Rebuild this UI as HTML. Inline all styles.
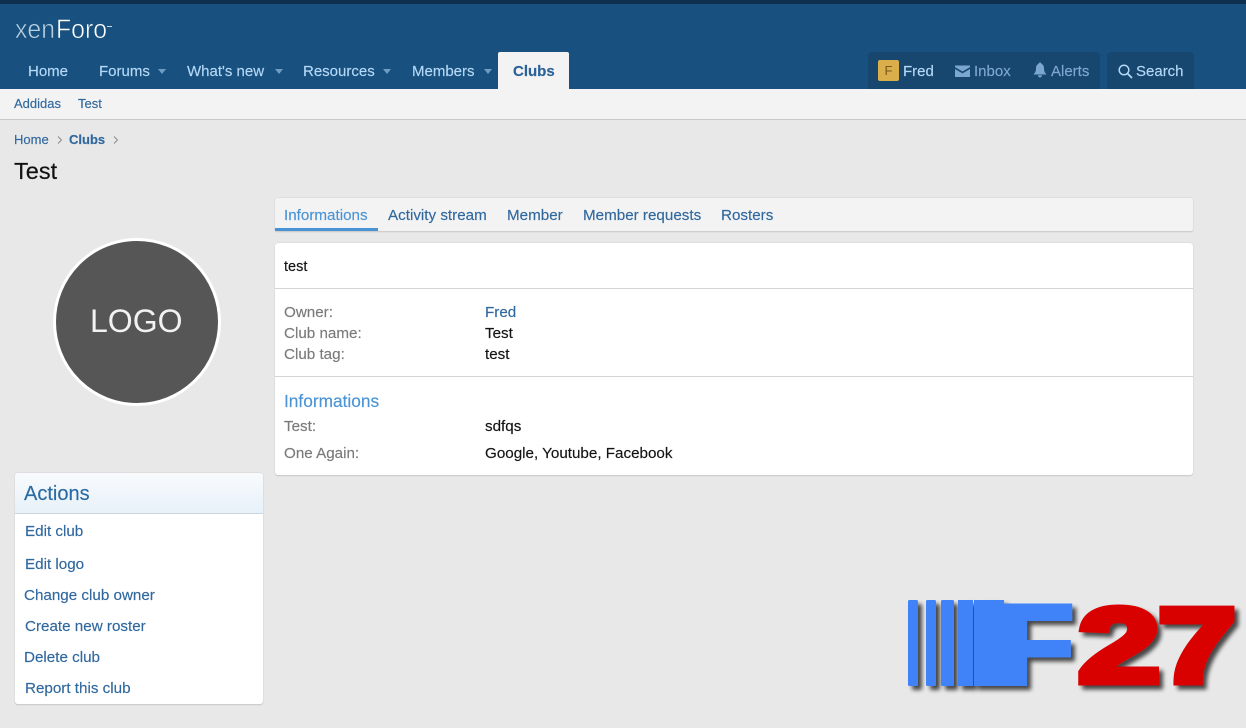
<!DOCTYPE html>
<html><head><meta charset="utf-8"><title>Test</title>
<style>
html,body{margin:0;padding:0}
body{width:1246px;height:728px;position:relative;overflow:hidden;background:#e8e8e8;font-family:"Liberation Sans",sans-serif;color:#141414}
.b{position:absolute}
.t{position:absolute;white-space:nowrap;line-height:20px;font-size:15.2px;margin-top:1px;-webkit-text-stroke:.15px currentColor}
.n{color:#b5d8f6;font-size:15px;top:61px}
.g{color:#7a7a7a}
.s{font-size:13px;color:#30689e}
.a{color:#30689e}
.c{position:absolute;top:69px;width:0;height:0;border-left:4.5px solid transparent;border-right:4.5px solid transparent;border-top:5px solid #6f9cc5}
</style></head><body>
<div class="b" style="left:0;top:0;width:1246px;height:4px;background:#0e2f4e"></div>
<div class="b" style="left:0;top:4px;width:1246px;height:85px;background:#18517f"></div>
<svg class="b" style="left:0;top:0" width="130" height="50">
<text x="15" y="38" font-family="Liberation Sans" font-size="27" fill="#b9d0e2" stroke="#18517f" stroke-width=".6" textLength="40" lengthAdjust="spacingAndGlyphs">xen</text>
<text x="56" y="38" font-family="Liberation Sans" font-size="27" fill="#fff" stroke="#18517f" stroke-width=".6" textLength="51" lengthAdjust="spacingAndGlyphs">Foro</text>
<rect x="107" y="26" width="5" height="1" fill="#c8d8e6"/>
</svg>
<div class="t n" style="left:28px">Home</div>
<div class="t n" style="left:99px">Forums</div><div class="c" style="left:158px"></div>
<div class="t n" style="left:187px">What's new</div><div class="c" style="left:275px"></div>
<div class="t n" style="left:303px">Resources</div><div class="c" style="left:383px"></div>
<div class="t n" style="left:412px">Members</div><div class="c" style="left:484px"></div>
<div class="b" style="left:498px;top:52px;width:71px;height:37px;background:#f3f3f3;border-radius:2px 2px 0 0"></div>
<div class="t" style="left:513px;top:61px;font-size:15px;font-weight:bold;color:#2b6299">Clubs</div>

<div class="b" style="left:868px;top:52px;width:232px;height:37px;background:#17476f;border-radius:4px 4px 0 0"></div>
<div class="b" style="left:1107px;top:52px;width:87px;height:37px;background:#17476f;border-radius:4px 4px 0 0"></div>
<div class="b" style="left:878px;top:60px;width:21px;height:21px;background:#d9ae4b;border-radius:2px;color:#77591c;font-size:13px;line-height:21px;text-align:center">F</div>
<div class="t n" style="left:903px">Fred</div>
<svg class="b" style="left:954px;top:64px" width="17" height="14"><path d="M1 1.500h15v1.600L8.500 7.500 1 3.100zM1 5l7.500 4.400L16 5v8H1z" fill="#7ba7cf"/></svg>
<div class="t n" style="left:974px;color:#7ea8cf">Inbox</div>
<svg class="b" style="left:1032px;top:62px" width="16" height="16"><path d="M8 .5c1 0 1.400.7 1.400 1.400C11.300 2.600 12 4.300 12 6.500c0 3 1 4.300 2.500 6H1.500C3 10.800 4 9.500 4 6.500c0-2.200.7-3.900 2.600-4.600C6.600 1.200 7 .5 8 .5zM6 13.300h4c0 1.300-1 2.200-2 2.200s-2-.9-2-2.200z" fill="#7ba7cf"/></svg>
<div class="t n" style="left:1051px;color:#7ea8cf">Alerts</div>
<svg class="b" style="left:1117px;top:63px" width="16" height="16"><circle cx="7" cy="7" r="4.800" fill="none" stroke="#b5d8f6" stroke-width="1.500"/><path d="M10.500 10.500L14.500 14.500" stroke="#b5d8f6" stroke-width="1.800" stroke-linecap="round"/></svg>
<div class="t n" style="left:1136px">Search</div>

<div class="b" style="left:0;top:89px;width:1246px;height:30px;background:#f3f3f3;border-bottom:1px solid #c9c9c9"></div>
<div class="t s" style="left:14px;top:93px">Addidas</div>
<div class="t s" style="left:78px;top:93px">Test</div>

<div class="t s" style="left:14px;top:129px">Home</div>
<svg class="b" style="left:56px;top:135px" width="8" height="10"><path d="M2 1.500L5.500 5 2 8.500" fill="none" stroke="#8a8a8a"/></svg>
<div class="t s" style="left:69px;top:129px;font-weight:bold">Clubs</div>
<svg class="b" style="left:112px;top:135px" width="8" height="10"><path d="M2 1.500L5.500 5 2 8.500" fill="none" stroke="#8a8a8a"/></svg>
<div class="t" style="left:14px;top:161px;font-size:23.500px;color:#111;margin-top:0">Test</div>

<div class="b" style="left:53px;top:238px;width:162px;height:162px;border:3px solid #fff;border-radius:50%;background:#565656"></div>
<div class="t" style="left:90px;top:311px;font-size:32px;color:#f2f2f2;margin-top:0;-webkit-text-stroke:0">LOGO</div>

<div class="b" style="left:275px;top:198px;width:918px;height:33px;background:#f3f3f3;border-radius:2px;box-shadow:0 0 0 .5px #d5d5d5,0 1px 1px #bbb"></div>
<div class="b" style="left:275px;top:228px;width:103px;height:3px;background:#4a94d6"></div>
<div class="t" style="left:284px;top:205px;color:#4a94d6">Informations</div>
<div class="t a" style="left:388px;top:205px">Activity stream</div>
<div class="t a" style="left:507px;top:205px">Member</div>
<div class="t a" style="left:583px;top:205px">Member requests</div>
<div class="t a" style="left:721px;top:205px">Rosters</div>

<div class="b" style="left:275px;top:243px;width:918px;height:232px;background:#fff;border-radius:3px;box-shadow:0 0 0 .5px #d5d5d5,0 1px 1px #bbb"></div>
<div class="b" style="left:275px;top:288px;width:918px;height:1px;background:#d4d4d4"></div>
<div class="b" style="left:275px;top:376px;width:918px;height:1px;background:#d4d4d4"></div>
<div class="t" style="left:284px;top:256px;font-size:14.500px">test</div>
<div class="t g" style="left:284px;top:302px">Owner:</div><div class="t a" style="left:485px;top:302px">Fred</div>
<div class="t g" style="left:284px;top:323px">Club name:</div><div class="t" style="left:485px;top:323px">Test</div>
<div class="t g" style="left:284px;top:344px">Club tag:</div><div class="t" style="left:485px;top:344px">test</div>
<div class="t" style="left:284px;top:390px;font-size:17.300px;color:#4a94d6">Informations</div>
<div class="t g" style="left:284px;top:416px">Test:</div><div class="t" style="left:485px;top:416px">sdfqs</div>
<div class="t g" style="left:284px;top:443px">One Again:</div><div class="t" style="left:485px;top:443px">Google, Youtube, Facebook</div>

<div class="b" style="left:15px;top:473px;width:248px;height:231px;background:#fff;border-radius:3px;box-shadow:0 0 0 .5px #d5d5d5,0 1px 1px #bbb"></div>
<div class="b" style="left:15px;top:473px;width:248px;height:40px;background:linear-gradient(#f9fbfd,#e7f1f9);border-bottom:1px solid #ccd6de;border-radius:3px 3px 0 0"></div>
<div class="t" style="left:24px;top:483px;font-size:20px;color:#2b6ba3">Actions</div>
<div class="t a" style="left:25px;top:521px">Edit club</div>
<div class="t a" style="left:25px;top:554px">Edit logo</div>
<div class="t a" style="left:24px;top:585px">Change club owner</div>
<div class="t a" style="left:25px;top:616px">Create new roster</div>
<div class="t a" style="left:24px;top:647px">Delete club</div>
<div class="t a" style="left:25px;top:678px">Report this club</div>

<svg class="b" style="left:890px;top:580px" width="356" height="130" viewBox="890 580 356 130">
<defs><filter id="sh" x="-10%" y="-10%" width="125%" height="130%"><feGaussianBlur in="SourceAlpha" stdDeviation="2.200"/><feOffset dx="4" dy="4"/><feComponentTransfer><feFuncA type="linear" slope=".7"/></feComponentTransfer><feMerge><feMergeNode/><feMergeNode in="SourceGraphic"/></feMerge></filter></defs>
<g filter="url(#sh)">
<g fill="#3f83f8">
<rect x="908" y="600" width="10" height="86" rx="1.500"/>
<rect x="926" y="600" width="10" height="86" rx="1.500"/>
<rect x="941" y="600" width="13" height="86" rx="1.500"/>
<rect x="958" y="600" width="15" height="86"/>
<rect x="974" y="600" width="30" height="86"/>
</g>
<text x="998" y="683.500" font-family="Liberation Sans" font-weight="bold" font-size="112" fill="#3f83f8" stroke="#3f83f8" stroke-width="5" textLength="76" lengthAdjust="spacingAndGlyphs">F</text>
<text x="1078" y="682" font-family="Liberation Sans" font-weight="bold" font-size="106" fill="#d90000" stroke="#d90000" stroke-width="7" textLength="82" lengthAdjust="spacingAndGlyphs">2</text>
<text x="1158" y="682" font-family="Liberation Sans" font-weight="bold" font-size="106" fill="#d90000" stroke="#d90000" stroke-width="7" textLength="78" lengthAdjust="spacingAndGlyphs">7</text>
</g>
</svg>
</body></html>
